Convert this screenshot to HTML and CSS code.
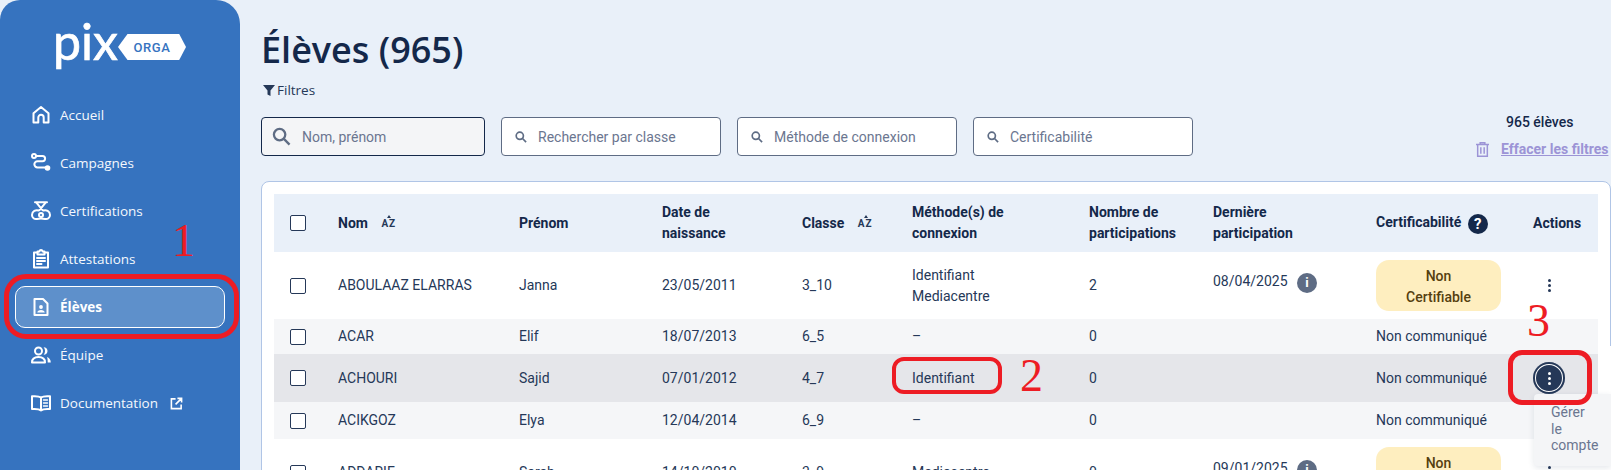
FILE: index.html
```html
<!DOCTYPE html>
<html lang="fr">
<head>
    <meta charset="UTF-8">
    <title>Pix Orga - Élèves</title>
    <link rel="stylesheet" href="styles.css">
</head>
<body>
    <aside class="sidebar">
        <div class="logo">
            <span class="logo-pix">pix</span>
            <span class="logo-badge">ORGA</span>
        </div>
        <nav class="nav">
            <a class="nav-item">
                <svg class="nav-icon" viewBox="0 0 20 20"><path d="M2.500 17.500V8.200L10 2l7.500 6.200v9.300h-4.800v-5a2.700 2.700 0 0 0-5.400 0v5z"/></svg>
                Accueil
            </a>
            <a class="nav-item">
                <svg class="nav-icon" viewBox="0 0 20 20"><circle cx="3" cy="3" r="2"/><path d="M5 3h6.500a2.600 2.600 0 0 1 0 5.200H6.500a3.100 3.100 0 0 0 0 6.300H14"/><circle class="solid" cx="16.500" cy="15" r="2.800"/></svg>
                Campagnes
            </a>
            <a class="nav-item">
                <svg class="nav-icon" viewBox="0 0 20 20"><path d="M4 1.200h12M5 1.200l6.500 8M15 1.200l-6.500 8"/><circle cx="10" cy="14" r="2"/><path d="M7.500 9.500C5 8.500 1 10 1 14c0 3 2.500 4.500 5 4 1.500-.3 2.500-.5 4-.5s2.500.2 4 .5c2.500.5 5-1 5-4 0-4-4-5.500-6.500-4.500"/></svg>
                Certifications
            </a>
            <a class="nav-item">
                <svg class="nav-icon" viewBox="0 0 20 20"><path d="M6.500 3.500H3v15h14v-15h-3.500"/><path d="M6.500 2.500h2a1.500 1.500 0 0 1 3 0h2v3h-7z"/><path d="M6 9h8M6 12h8M6 15h4.500"/></svg>
                Attestations
            </a>
            <a class="nav-item active">
                <svg class="nav-icon" viewBox="0 0 20 20"><path d="M3.500 2h8.500l4.500 4.500v11.500h-13z"/><circle class="solid" cx="10" cy="10" r="1.900"/><path class="solid" d="M6.300 15.500c0-1.800 1.700-2.600 3.700-2.600s3.700.8 3.700 2.600z"/></svg>
                Élèves
            </a>
            <a class="nav-item">
                <svg class="nav-icon" viewBox="0 0 20 20"><circle cx="7.500" cy="6" r="3.500"/><path d="M1 17.500c0-3.600 2.800-5.500 6.500-5.500s6.500 1.900 6.500 5.500z"/><path class="solid" d="M12.500 2.300c2.500 0 4 1.600 4 3.700s-1.500 3.700-4 3.700c1-1 1.500-2.300 1.500-3.700s-.5-2.700-1.500-3.700z"/><path class="solid" d="M16 12c2.200.8 3.800 2.800 3.800 5.500H16.700c0-2-.1-4-.7-5.500z"/></svg>
                Équipe
            </a>
            <a class="nav-item">
                <svg class="nav-icon" viewBox="0 0 20 20"><path d="M10 4.500C8 3 5 3 1 3.300v12.700c4-.3 7-.3 9 1.500 2-1.800 5-1.800 9-1.500V3.300c-4-.3-7-.3-9 1.200zM10 4.500v13"/><path class="thin" d="M12.500 7h4M12.500 10h4M12.500 13h4"/></svg>
                Documentation
                <svg class="nav-ext" viewBox="0 0 14 14"><path d="M6 2H1.500v10.500H12V8M8 1.500h4.500V6M12.500 1.500L6 8"/></svg>
            </a>
        </nav>
    </aside>

    <main class="content">
        <h1 class="title">Élèves (965)</h1>
        <div class="filter-label">
            <svg class="funnel" viewBox="0 0 12 12"><path d="M0 1h12L7.500 6.500V12l-3-1.500v-4z"/></svg>
            Filtres
        </div>

        <div class="filters">
            <div class="search search-main">
                <svg class="search-icon" viewBox="0 0 20 20"><circle cx="8" cy="8" r="6"/><path d="M12.500 12.500L18.500 18.500"/></svg>
                Nom, prénom
            </div>
            <div class="search">
                <svg class="search-icon small" viewBox="0 0 20 20"><circle cx="8" cy="8" r="6"/><path d="M12.500 12.500L18.500 18.500"/></svg>
                Rechercher par classe
            </div>
            <div class="search">
                <svg class="search-icon small" viewBox="0 0 20 20"><circle cx="8" cy="8" r="6"/><path d="M12.500 12.500L18.500 18.500"/></svg>
                Méthode de connexion
            </div>
            <div class="search">
                <svg class="search-icon small" viewBox="0 0 20 20"><circle cx="8" cy="8" r="6"/><path d="M12.500 12.500L18.500 18.500"/></svg>
                Certificabilité
            </div>
            <div class="filter-side">
                <div class="count">965 élèves</div>
                <a class="clear">
                    <svg class="trash" viewBox="0 0 14 16"><path d="M0 2.500h14M4.500 2.500V.8h5v1.700M1.800 2.500v12.700h10.400V2.500M5.200 5.500v7M8.800 5.500v7"/></svg>
                    <span>Effacer les filtres</span>
                </a>
            </div>
        </div>

        <section class="card">
            <table class="students">
                <colgroup>
                    <col class="c-check"><col class="c-nom"><col class="c-prenom"><col class="c-date"><col class="c-classe">
                    <col class="c-methode"><col class="c-nombre"><col class="c-derniere"><col class="c-certif"><col class="c-actions">
                </colgroup>
                <thead>
                    <tr>
                        <th class="cell-check"><span class="box"></span></th>
                        <th>Nom <span class="sort">AZ</span></th>
                        <th>Prénom</th>
                        <th>Date de<br>naissance</th>
                        <th>Classe <span class="sort">AZ</span></th>
                        <th>Méthode(s) de<br>connexion</th>
                        <th>Nombre de<br>participations</th>
                        <th>Dernière<br>participation</th>
                        <th>Certificabilité <span class="help">?</span></th>
                        <th>Actions</th>
                    </tr>
                </thead>
                <tbody>
                    <tr class="row-tall">
                        <td class="cell-check"><span class="box"></span></td>
                        <td>ABOULAAZ ELARRAS</td>
                        <td>Janna</td>
                        <td>23/05/2011</td>
                        <td>3_10</td>
                        <td>Identifiant<br>Mediacentre</td>
                        <td>2</td>
                        <td><span class="last-date">08/04/2025 <span class="info">i</span></span></td>
                        <td><span class="pill">Non<br>Certifiable</span></td>
                        <td><span class="dots"><i></i><i></i><i></i></span></td>
                    </tr>
                    <tr class="row-grey row-35">
                        <td class="cell-check"><span class="box"></span></td>
                        <td>ACAR</td>
                        <td>Elif</td>
                        <td>18/07/2013</td>
                        <td>6_5</td>
                        <td>–</td>
                        <td>0</td>
                        <td></td>
                        <td>Non communiqué</td>
                        <td></td>
                    </tr>
                    <tr class="row-hover">
                        <td class="cell-check"><span class="box"></span></td>
                        <td>ACHOURI</td>
                        <td>Sajid</td>
                        <td>07/01/2012</td>
                        <td>4_7</td>
                        <td>Identifiant</td>
                        <td>0</td>
                        <td></td>
                        <td>Non communiqué</td>
                        <td><span class="dots dots-on"><i></i><i></i><i></i></span></td>
                    </tr>
                    <tr class="row-grey row-37">
                        <td class="cell-check"><span class="box"></span></td>
                        <td>ACIKGOZ</td>
                        <td>Elya</td>
                        <td>12/04/2014</td>
                        <td>6_9</td>
                        <td>–</td>
                        <td>0</td>
                        <td></td>
                        <td>Non communiqué</td>
                        <td></td>
                    </tr>
                    <tr class="row-tall">
                        <td class="cell-check"><span class="box"></span></td>
                        <td>ADDARIE</td>
                        <td>Sarah</td>
                        <td>14/10/2010</td>
                        <td>3_9</td>
                        <td>Mediacentre</td>
                        <td>0</td>
                        <td><span class="last-date">09/01/2025 <span class="info">i</span></span></td>
                        <td><span class="pill">Non<br>Certifiable</span></td>
                        <td><span class="dots"><i></i><i></i><i></i></span></td>
                    </tr>
                </tbody>
            </table>
        </section>
    </main>

    <div class="edge-cover"></div>
    <div class="menu">Gérer<br>le<br>compte</div>

    <!-- annotations -->
    <div class="mark mark-eleves"></div>
    <div class="mark mark-ident"></div>
    <div class="mark mark-action"></div>
    <span class="num num-1">1</span>
    <span class="num num-2">2</span>
    <span class="num num-3">3</span>
</body>
</html>
```

FILE: styles.css
```css
* {
    box-sizing: border-box;
}

html, body {
    height: 470px;
    overflow: hidden;
}

body {
    margin: 0;
    display: flex;
    align-items: flex-start;
    background-color: #e9f0f9;
    color: #253858;
    font-family: 'Roboto', sans-serif;
    font-size: 14px;
    position: relative;
}

/* sidebar */
.sidebar {
    flex: 0 0 240px;
    height: 470px;
    background-color: #3673bf;
    border-radius: 20px 24px 0 0;
    color: #fff;
    font-family: 'Open Sans', sans-serif;
}

.logo {
    height: 94px;
    padding: 16px 0 0 53px;
    display: flex;
    align-items: flex-start;
}

.logo-pix {
    font-family: 'Lato', sans-serif;
    font-size: 50px;
    line-height: 50px;
    width: 65px;
    -webkit-text-stroke: 0.7px #fff;
}

.logo-badge {
    margin-top: 18px;
    width: 68px;
    height: 26px;
    background-color: #fff;
    color: #3673bf;
    font-family: 'Roboto', sans-serif;
    font-size: 13px;
    font-weight: 500;
    letter-spacing: 0.6px;
    display: flex;
    align-items: center;
    justify-content: center;
    clip-path: polygon(0 50%, 14% 0, 90% 0, 100% 50%, 90% 100%, 14% 100%);
}

.nav {
    display: flex;
    flex-direction: column;
    gap: 6px;
    padding: 0 15px;
}

.nav-item {
    height: 42px;
    display: flex;
    align-items: center;
    gap: 9px;
    padding-left: 15px;
    font-size: 13.500px;
    border: 1px solid transparent;
    border-radius: 10px;
    color: #f4f8fd;
}

.nav-item.active {
    background-color: #5e90cb;
    border-color: #fff;
    font-weight: 700;
    color: #fff;
}

.nav-icon {
    width: 20px;
    height: 20px;
    fill: none;
    stroke: #fff;
    stroke-width: 2;
    stroke-linejoin: round;
    stroke-linecap: round;
}

.nav-icon .solid {
    fill: #fff;
    stroke: none;
}

.nav-icon .thin {
    stroke-width: 1.400;
}

.nav-ext {
    width: 13px;
    height: 13px;
    margin-left: 3px;
    fill: none;
    stroke: #fff;
    stroke-width: 1.700;
}

/* main */
.content {
    flex: 1;
    min-width: 0;
    padding-left: 21px;
}

.title {
    margin: 0;
    padding-top: 26px;
    font-family: 'Open Sans', sans-serif;
    font-size: 36px;
    line-height: 47px;
    font-weight: 600;
    color: #14284a;
}

.filter-label {
    margin-top: 7px;
    height: 20px;
    padding-left: 2px;
    display: flex;
    align-items: center;
    gap: 2px;
    font-family: 'Open Sans', sans-serif;
    font-size: 13.500px;
    color: #253858;
}

.funnel {
    width: 12px;
    height: 12px;
    fill: #253858;
}

.filters {
    margin-top: 17px;
    display: flex;
    gap: 16px;
}

.search {
    width: 220px;
    height: 39px;
    padding-left: 13px;
    background-color: #fff;
    border: 1px solid #5e6c84;
    border-radius: 4px;
    display: flex;
    align-items: center;
    gap: 11px;
    color: #6b7690;
}

.search-main {
    width: 224px;
    padding-left: 10px;
    background-color: #f4f5f7;
    border-color: #14284a;
    gap: 11px;
}

.search-icon {
    width: 19px;
    height: 19px;
    fill: none;
    stroke: #5e6c84;
    stroke-width: 2.400;
}

.search-icon.small {
    width: 12px;
    height: 12px;
    stroke-width: 2.800;
}

.filter-side {
    position: relative;
    flex: 1;
    font-size: 14px;
}

.count {
    position: absolute;
    left: 297px;
    top: -3px;
    font-weight: 500;
    color: #14284a;
    white-space: nowrap;
}

.clear {
    position: absolute;
    left: 267px;
    top: 24px;
    display: flex;
    align-items: center;
    gap: 12px;
    color: #9c94d6;
    font-size: 14px;
    font-weight: 700;
    white-space: nowrap;
}

.clear span {
    text-decoration: underline;
}

.trash {
    width: 13px;
    height: 15px;
    fill: none;
    stroke: #9c94d6;
    stroke-width: 1.600;
}

/* table */
.card {
    margin-top: 25px;
    padding: 12px;
    height: 300px;
    background-color: #fff;
    border: 1px solid #b0c5e6;
    border-radius: 8px 8px 0 0;
}

.students {
    width: 1324px;
    table-layout: fixed;
    border-collapse: collapse;
    line-height: 21px;
}

.c-check { width: 64px; }
.c-nom { width: 181px; }
.c-prenom { width: 143px; }
.c-date { width: 140px; }
.c-classe { width: 110px; }
.c-methode { width: 177px; }
.c-nombre { width: 124px; }
.c-derniere { width: 163px; }
.c-certif { width: 157px; }
.c-actions { width: 65px; }

.students th, .students td {
    padding: 0;
    text-align: left;
    vertical-align: middle;
}

.students thead tr {
    height: 58px;
    background-color: #e9f0f9;
}

.students th {
    font-weight: 700;
    color: #14284a;
}

.cell-check {
    padding-left: 16px !important;
}

.box {
    display: block;
    width: 16px;
    height: 16px;
    background-color: #fff;
    border: 1px solid #253858;
    border-radius: 2px;
}

.row-tall { height: 67px; }
.row-35 { height: 35px; }
.row-37 { height: 37px; }
.row-grey { background-color: #f5f6f8; }
.row-hover { height: 48px; background-color: #e5e6ea; }

.sort {
    position: relative;
    margin-left: 10px;
    font-size: 10px;
    letter-spacing: 1px;
    color: #253858;
    vertical-align: 1px;
}

.sort::before {
    content: "";
    position: absolute;
    left: 6px;
    top: -3px;
    border-left: 2px solid transparent;
    border-right: 2px solid transparent;
    border-bottom: 3px solid #253858;
}

.help, .info {
    display: inline-block;
    width: 20px;
    height: 20px;
    border-radius: 50%;
    color: #fff;
    text-align: center;
    font-weight: 700;
    font-size: 15px;
    line-height: 20px;
    vertical-align: middle;
}

.help {
    margin-left: 3px;
    background-color: #14284a;
}

.info {
    margin-left: 6px;
    background-color: #5e6c84;
    font-size: 13px;
}

.last-date {
    display: block;
    margin-top: -7px;
}

.pill {
    display: block;
    width: 125px;
    height: 51px;
    padding-top: 6px;
    background-color: #feeebf;
    border-radius: 13px;
    text-align: center;
    font-weight: 500;
    color: #55400f;
}

.dots {
    width: 32px;
    height: 32px;
    display: flex;
    flex-direction: column;
    align-items: center;
    justify-content: center;
    gap: 2px;
    border-radius: 50%;
}

.dots i {
    width: 3px;
    height: 3px;
    border-radius: 50%;
    background-color: #253858;
}

.dots-on {
    background-color: #253858;
    box-shadow: inset 0 0 0 2px #253858, inset 0 0 0 3px #fff;
}

.dots-on i {
    background-color: #fff;
}

/* overlays */
.edge-cover {
    position: absolute;
    left: 1599px;
    top: 346px;
    width: 12px;
    height: 124px;
    background-color: #fff;
}

.menu {
    position: absolute;
    left: 1534px;
    top: 394px;
    width: 77px;
    height: 72px;
    padding: 10px 0 0 17px;
    background-color: #f4f5f7;
    border-radius: 4px 0 0 4px;
    box-shadow: 0 2px 6px rgba(37, 56, 88, 0.12);
    color: #6b7690;
    line-height: 16.500px;
}

.mark {
    position: absolute;
    border: 5px solid #ed1c24;
}

.mark-eleves {
    left: 4px;
    top: 274px;
    width: 235px;
    height: 65px;
    border-radius: 22px;
}

.mark-ident {
    left: 892px;
    top: 357px;
    width: 110px;
    height: 37px;
    border-radius: 12px;
    border-width: 4px;
}

.mark-action {
    left: 1508px;
    top: 350px;
    width: 84px;
    height: 55px;
    border-radius: 14px;
}

.num {
    position: absolute;
    color: #ed1c24;
    font-family: 'Liberation Serif', serif;
    font-size: 46px;
    line-height: 46px;
}

.num-1 { left: 172px; top: 218px; }
.num-2 { left: 1020px; top: 353px; }
.num-3 { left: 1527px; top: 298px; }
```
